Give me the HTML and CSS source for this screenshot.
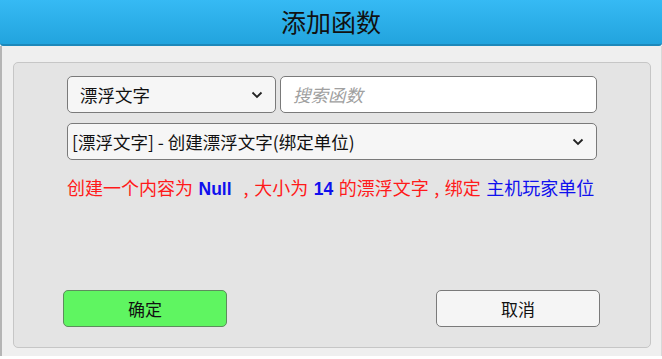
FILE: index.html
```html
<!DOCTYPE html>
<html lang="zh">
<head>
<meta charset="utf-8">
<link rel="stylesheet" href="styles.css">
</head>
<body>
<div class="dialog">
  <div class="header">添加函数</div>
  <div class="body">
    <div class="panel">
      <div class="row">
        <div class="select select-cat"><span>漂浮文字</span><svg class="chev" viewBox="0 0 12 8" width="12" height="8"><path d="M1.5 1.5 L6 6 L10.5 1.5" fill="none" stroke="#222" stroke-width="1.8"/></svg></div>
        <div class="search">搜索函数</div>
      </div>
      <div class="row">
        <div class="select select-fn"><span>[漂浮文字] - 创建漂浮文字(绑定单位)</span><svg class="chev" viewBox="0 0 12 8" width="12" height="8"><path d="M1.5 1.5 L6 6 L10.5 1.5" fill="none" stroke="#222" stroke-width="1.8"/></svg></div>
      </div>
      <div class="desc"><span class="red">创建一个内容为</span> <b class="blue">Null</b><span class="gap"></span><span class="red">, 大小为</span> <b class="blue">14</b> <span class="red">的漂浮文字 , 绑定</span> <span class="blue">主机玩家单位</span></div>
      <div class="buttons">
        <div class="btn ok">确定</div>
        <div class="btn cancel">取消</div>
      </div>
    </div>
  </div>
</div>
</body>
</html>
```
FILE: styles.css
```css
html, body {
  margin: 0;
  padding: 0;
  background: #ffffff;
}
body {
  width: 662px;
  height: 359px;
  overflow: hidden;
  font-family: "Noto Sans CJK SC", "Noto Sans", sans-serif;
}
.dialog {
  width: 662px;
  height: 356px;
  display: flex;
  flex-direction: column;
}
.header {
  height: 44px;
  background: linear-gradient(#36baf4, #22a4de);
  border-bottom: 2px solid #1d88ba;
  border-radius: 0 0 3px 3px;
  color: #111;
  font-size: 25px;
  line-height: 42px;
  text-align: center;
}
.body {
  flex: 1;
  background: #efefef;
  border-left: 2px solid #b5b5b5;
  border-right: 1px solid #d8d8d8;
  padding: 16px 10px 8px 11px;
  display: flex;
}
.panel {
  flex: 1;
  background: #e4e4e4;
  border: 1px solid #c6c6c6;
  border-radius: 5px;
  padding: 13px 53px 0 53px;
  display: flex;
  flex-direction: column;
}
.row {
  display: flex;
  gap: 4px;
  margin-bottom: 10px;
}
.select {
  background: #f6f6f6;
  border: 1px solid #7a7a7a;
  border-radius: 5px;
  display: flex;
  align-items: center;
  justify-content: space-between;
  padding: 0 12px 0 12px;
  box-sizing: border-box;
  height: 37px;
  font-size: 17.5px;
  color: #111;
}
.select-cat {
  width: 209px;
}
.select-fn {
  flex: 1;
  padding-left: 4px;
}
.search {
  flex: 1;
  height: 37px;
  box-sizing: border-box;
  background: #ffffff;
  border: 1px solid #7a7a7a;
  border-radius: 5px;
  padding: 0 12px;
  display: flex;
  align-items: center;
  font-size: 17.5px;
  font-style: italic;
  color: #a0a0a0;
}
.desc {
  margin-top: 6px;
  font-size: 18px;
  white-space: nowrap;
  line-height: 22px;
  word-spacing: 1.5px;
}
.gap {
  display: inline-block;
  width: 12px;
}
.red { color: #ff1a1a; }
.blue { color: #1010ee; }
b.blue { font-family: "Liberation Sans", Arial, sans-serif; font-weight: bold; font-size: 17.5px; }
.buttons {
  margin-top: auto;
  margin-bottom: 20px;
  margin-left: -4px;
  margin-right: -3px;
  display: flex;
  justify-content: space-between;
}
.btn {
  width: 164px;
  height: 37px;
  box-sizing: border-box;
  border-radius: 5px;
  display: flex;
  align-items: center;
  justify-content: center;
  font-size: 17px;
  color: #111;
}
.ok {
  background: #5ff561;
  border: 1px solid #5d8d5d;
}
.cancel {
  background: #f5f5f5;
  border: 1px solid #7a7a7a;
}
```
